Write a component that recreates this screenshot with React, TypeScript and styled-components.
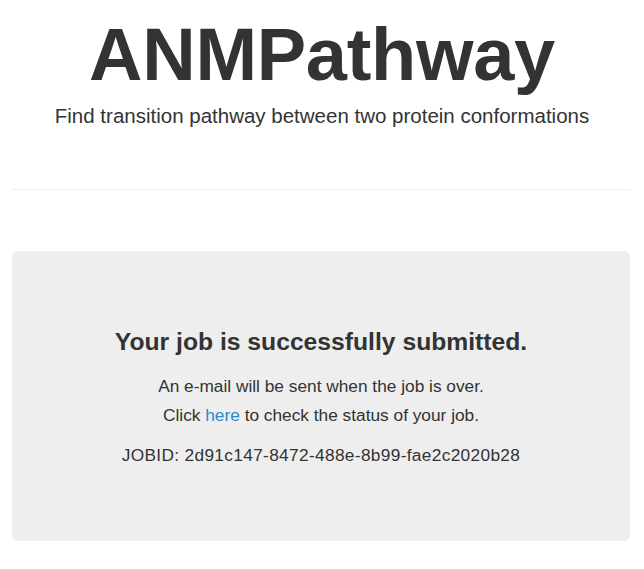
import React from "react";
import styled, { createGlobalStyle } from "styled-components";

const GlobalStyle = createGlobalStyle`
  html, body {
    margin: 0;
    padding: 0;
    background: #fff;
  }
  body {
    font-family: "Liberation Sans", Arial, Helvetica, sans-serif;
    color: #333;
    font-size: 16px;
    line-height: 1.43;
  }
`;

const Page = styled.div`
  padding: 0 12px;
  display: flex;
  flex-direction: column;
`;

const Header = styled.header`
  display: flex;
  flex-direction: column;
  align-items: center;
  padding-top: 14px;
`;

const Title = styled.h1`
  margin: 0;
  font-size: 74px;
  line-height: 1.1;
  font-weight: 700;
  letter-spacing: -0.3px;
  color: #333;
`;

const Lead = styled.p`
  margin: 7px 0 0;
  font-size: 20.5px;
  line-height: 1.4;
  font-weight: 300;
  color: #333;
`;

const Rule = styled.hr`
  margin: 58px 0 0;
  border: 0;
  border-top: 1px solid #eee;
  height: 0;
  width: 618px;
`;

const Well = styled.section`
  margin-top: 61px;
  width: 618px;
  box-sizing: border-box;
  background: #eee;
  border-radius: 6px;
  padding: 77px 20px 74px;
  display: flex;
  flex-direction: column;
  align-items: center;
  text-align: center;
`;

const Heading = styled.h3`
  margin: 0 0 19px;
  font-size: 24.7px;
  line-height: 1.1;
  font-weight: 700;
  color: #333;
`;

const Line = styled.p<{ $gap: number; $spacing?: number }>`
  margin: 0 0 ${(p) => p.$gap}px;
  font-size: 17.3px;
  line-height: 1.43;
  letter-spacing: ${(p) => p.$spacing ?? 0}px;
  color: #333;
`;

const Link = styled.a`
  color: #2a8ace;
  text-decoration: none;
`;

export default function App() {
  return (
    <>
      <GlobalStyle />
      <Page>
        <Header>
          <Title>ANMPathway</Title>
          <Lead>Find transition pathway between two protein conformations</Lead>
        </Header>
        <Rule />
        <Well>
          <Heading>Your job is successfully submitted.</Heading>
          <Line $gap={4}>An e-mail will be sent when the job is over.</Line>
          <Line $gap={15}>
            Click <Link href="#">here</Link> to check the status of your job.
          </Line>
          <Line $gap={0} $spacing={0.33}>
            JOBID: 2d91c147-8472-488e-8b99-fae2c2020b28
          </Line>
        </Well>
      </Page>
    </>
  );
}
